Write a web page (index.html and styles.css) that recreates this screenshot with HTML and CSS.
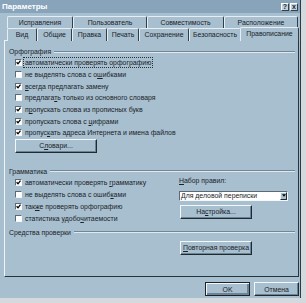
FILE: index.html
```html
<!DOCTYPE html>
<html lang="ru">
<head>
<meta charset="utf-8">
<title>Параметры</title>
<link rel="stylesheet" href="styles.css">
</head>
<body>
<div class="dialog">
  <div class="titlebar">
    <span class="title">Параметры</span>
    <div class="tbtns"><span class="tb">?</span><span class="tb">x</span></div>
  </div>
  <div class="tabs">
    <div class="row back">
      <div class="tab">Исправления</div>
      <div class="tab">Пользователь</div>
      <div class="tab">Совместимость</div>
      <div class="tab">Расположение</div>
    </div>
    <div class="row front">
      <div class="tab">Вид</div>
      <div class="tab">Общие</div>
      <div class="tab">Правка</div>
      <div class="tab">Печать</div>
      <div class="tab">Сохранение</div>
      <div class="tab">Безопасность</div>
      <div class="tab sel">Правописание</div>
    </div>
  </div>
  <div class="panel">
    <div class="grp">Орфография</div>
    <div class="checks spell">
      <div class="chk"><span class="box on"><svg viewBox="0 0 5 5"><path d="M0.6 2.3 L2 3.8 L4.5 0.6"/></svg></span><span class="lbl focus">автоматически проверять орфографию</span></div>
      <div class="chk"><span class="box"></span><span class="lbl">не выделять слова с о<u>ш</u>ибками</span></div>
      <div class="chk"><span class="box on"><svg viewBox="0 0 5 5"><path d="M0.6 2.3 L2 3.8 L4.5 0.6"/></svg></span><span class="lbl"><u>в</u>сегда предлагать замену</span></div>
      <div class="chk"><span class="box"></span><span class="lbl">предлага<u>т</u>ь только из основного словаря</span></div>
      <div class="chk"><span class="box on"><svg viewBox="0 0 5 5"><path d="M0.6 2.3 L2 3.8 L4.5 0.6"/></svg></span><span class="lbl">п<u>р</u>опускать слова из прописных букв</span></div>
      <div class="chk"><span class="box on"><svg viewBox="0 0 5 5"><path d="M0.6 2.3 L2 3.8 L4.5 0.6"/></svg></span><span class="lbl">пропускать слова с <u>ц</u>ифрами</span></div>
      <div class="chk"><span class="box on"><svg viewBox="0 0 5 5"><path d="M0.6 2.3 L2 3.8 L4.5 0.6"/></svg></span><span class="lbl">пропус<u>к</u>ать адреса Интернета и имена файлов</span></div>
    </div>
    <button class="btn dict">С<u>л</u>овари...</button>

    <div class="grp gram-h">Грамматика</div>
    <div class="gram">
      <div class="checks">
        <div class="chk g"><span class="box on"><svg viewBox="0 0 5 5"><path d="M0.6 2.3 L2 3.8 L4.5 0.6"/></svg></span><span class="lbl">автоматически проверять <u>г</u>рамматику</span></div>
        <div class="chk g"><span class="box"></span><span class="lbl">не выделять слова с ошиб<u>к</u>ами</span></div>
        <div class="chk g"><span class="box on"><svg viewBox="0 0 5 5"><path d="M0.6 2.3 L2 3.8 L4.5 0.6"/></svg></span><span class="lbl">так<u>ж</u>е проверять орфографию</span></div>
        <div class="chk g"><span class="box"></span><span class="lbl">статистика удобо<u>ч</u>итаемости</span></div>
      </div>
      <div class="rules">
        <div class="rlabel"><u>Н</u>абор правил:</div>
        <div class="combo"><span class="ctext">Для деловой переписки</span><span class="arrow"><svg viewBox="0 0 5 3"><path d="M0 0 H5 L2.5 3 Z"/></svg></span></div>
        <button class="btn setup">На<u>с</u>тройка...</button>
      </div>
    </div>

    <div class="grp tools-h">Средства проверки</div>
    <button class="btn recheck"><u>П</u>овторная проверка</button>
  </div>
  <div class="footer">
    <button class="btn ok">OK</button>
    <button class="btn cancel">Отмена</button>
  </div>
</div>
</body>
</html>
```
FILE: styles.css
```css
* { box-sizing: border-box; margin: 0; padding: 0; }
html, body { width: 306px; height: 303px; overflow: hidden; }
body {
  background: #d3d9dc;
  font-family: "Liberation Sans", Arial, sans-serif;
  font-size: 6.9px;
  color: #1a2227;
}
u { text-decoration: underline; text-underline-offset: 1px; }

.dialog {
  width: 301px;
  height: 298px;
  background: #a7bfcf;
  border-right: 1px solid #2c3a44;
  display: flex;
  flex-direction: column;
}

.titlebar {
  height: 13px;
  background: #88a4ba;
  display: flex;
  align-items: center;
  justify-content: space-between;
  padding: 0 2px 0 2px;
}
.title { color: #fff; font-weight: bold; font-size: 8px; }
.tbtns { display: flex; gap: 1px; }
.tb {
  width: 8px;
  height: 8px;
  background: #c3d2dc;
  border: 1px solid;
  border-color: #fff #33414b #33414b #fff;
  font-size: 7px;
  font-weight: bold;
  line-height: 6px;
  text-align: center;
  color: #1b2329;
}

.tabs { padding: 3px 0 0 7px; position: relative; z-index: 2; }
.row { display: grid; height: 12px; }
.back { grid-template-columns: 66px 74px 77px 74px; }
.front { grid-template-columns: 30px 35px 35px 32px 50px 52px 56px; }
.tab {
  border-left: 1px solid #e6eef3;
  border-top: 1px solid #e6eef3;
  border-right: 1px solid #2f3e48;
  border-radius: 2px 2px 0 0;
  text-align: center;
  line-height: 11px;
  white-space: nowrap;
  background: #a7bfcf;
}
.tab.sel {
  margin-top: -1px;
  height: 14px;
  margin-right: -2px;
  margin-left: -1px;
}

.panel {
  margin-left: 4px;
  width: 295px;
  height: 237px;
  border: 1px solid;
  border-color: #eef4f8 #26343e #26343e #eef4f8;
  padding: 6px 3px 0 4px;
  display: flex;
  flex-direction: column;
  align-items: flex-start;
}

.grp {
  align-self: stretch;
  display: flex;
  align-items: center;
  gap: 3px;
  height: 9px;
  line-height: 9px;
}
.grp::after {
  content: "";
  flex: 1;
  border-top: 1px solid #6f8797;
  border-bottom: 1px solid #dfe9ef;
}

.checks { margin: 1px 0 0 6px; }
.chk { display: flex; align-items: center; height: 11.67px; gap: 3px; white-space: nowrap; }
.chk.g { height: 12px; }
.box {
  width: 7px;
  height: 7px;
  background: #fff;
  border: 1px solid;
  border-color: #5a6b77 #f4f8fa #f4f8fa #5a6b77;
  display: flex;
}
.box svg { width: 5px; height: 5px; }
.box path { fill: none; stroke: #000; stroke-width: 1.3; }
.lbl { line-height: 9px; }
.lbl.focus { outline: 1px dotted #2a3136; outline-offset: 0; padding: 0 1px; margin-left: -1px; }

.btn {
  height: 14px;
  border: 1px solid;
  border-color: #f2f7fa #1f2b33 #1f2b33 #f2f7fa;
  box-shadow: inset -1px -1px #6d8393;
  background: #a7bfcf;
  font: inherit;
  color: inherit;
  display: flex;
  align-items: center;
  justify-content: center;
}
.dict { width: 82px; margin-left: 6px; }

.gram-h { margin-top: 14px; }
.gram { display: grid; grid-template-columns: 170px 116px; align-self: stretch; }
.rules { padding-top: 1px; }
.rlabel { height: 8px; line-height: 8px; }
.combo {
  margin-top: 6px;
  width: 109px;
  height: 10px;
  background: #fff;
  border: 1px solid;
  border-color: #5a6b77 #f4f8fa #f4f8fa #5a6b77;
  display: flex;
  align-items: center;
}
.ctext { padding-left: 1px; line-height: 8px; flex: 1; white-space: nowrap; }
.arrow {
  width: 7px;
  height: 8px;
  background: #a7bfcf;
  border: 1px solid;
  border-color: #f2f7fa #1f2b33 #1f2b33 #f2f7fa;
  display: flex;
  align-items: center;
  justify-content: center;
}
.arrow svg { width: 4px; height: 3px; }
.arrow path { fill: #000; }
.setup { margin-top: 4px; margin-left: 1px; width: 72px; }

.tools-h { margin-top: 3px; }
.recheck { margin-top: 4px; margin-left: 171px; width: 72px; }

.footer {
  display: flex;
  justify-content: flex-end;
  gap: 4px;
  padding-right: 1px;
  margin-top: 5px;
}
.ok { width: 45px; border-color: #1b242a; box-shadow: inset 1px 1px #f2f7fa, inset -2px -2px #6d8393; }
.cancel { width: 45px; }
```
